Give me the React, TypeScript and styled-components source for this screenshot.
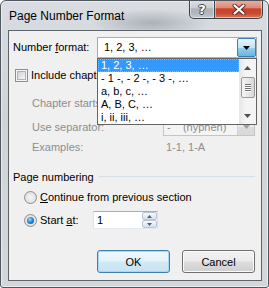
import React from "react";
import styled, { createGlobalStyle } from "styled-components";

const Global = createGlobalStyle`
  html, body { margin: 0; padding: 0; }
  body {
    font-family: "Liberation Sans", Arial, sans-serif;
    font-size: 11px;
    color: #000;
    background: #ffffff;
  }
`;

const Window = styled.div`
  box-sizing: border-box;
  width: 269px;
  height: 288px;
  display: flex;
  flex-direction: column;
  border: 1px solid #4f565e;
  border-radius: 6px 6px 3px 3px;
  background:
    radial-gradient(ellipse 60px 14px at 150px 22px, rgba(120, 126, 134, 0.45), rgba(120, 126, 134, 0) 100%),
    linear-gradient(180deg, #d9dde2 0%, #cfd4d9 40%, #d3d7dc 100%);
  box-shadow: inset 0 0 0 1px rgba(255, 255, 255, 0.55);
  overflow: hidden;
`;

const TitleBar = styled.div`
  flex: none;
  height: 29px;
  display: flex;
  align-items: flex-start;
  padding-left: 8px;
`;

const Title = styled.div`
  font-size: 12px;
  line-height: 15px;
  margin-top: 8px;
  color: #000;
`;

const CaptionButtons = styled.div`
  margin-left: auto;
  margin-right: 5px;
  margin-top: -1px;
  display: flex;
`;

const CaptionButton = styled.div<{ $close?: boolean }>`
  box-sizing: border-box;
  height: 19px;
  width: ${(p) => (p.$close ? 48 : 26)}px;
  display: flex;
  align-items: center;
  justify-content: center;
  border: 1px solid #3e434a;
  border-top: none;
  ${(p) => (p.$close ? "border-left: none;" : "")}
  border-radius: ${(p) => (p.$close ? "0 0 5px 0" : "0 0 0 5px")};
  background: ${(p) =>
    p.$close
      ? "linear-gradient(180deg, #e8b1a5 0%, #df8a76 42%, #c8432a 50%, #c84a2f 75%, #dc7a5c 100%)"
      : "linear-gradient(180deg, #dfe2e5 0%, #c9cdd2 42%, #aeb3b9 50%, #b2b7bd 75%, #c8ccd1 100%)"};
  box-shadow: inset 0 0 0 1px rgba(255, 255, 255, 0.45);
`;

const HelpGlyph = styled.span`
  font-family: "DejaVu Sans", sans-serif;
  font-weight: bold;
  font-size: 13px;
  line-height: 13px;
  color: #ffffff;
  text-shadow: 0 0 1px #30353b, 1px 0 0 #4a4f55, -1px 0 0 #4a4f55, 0 1px 0 #4a4f55, 0 -1px 0 #4a4f55;
`;

const Client = styled.div`
  flex: 1;
  box-sizing: border-box;
  margin: 0 6px 6px 7px;
  border: 1px solid #5d646c;
  background: #f0f0f0;
  display: flex;
  flex-direction: column;
  padding: 0 4px;
`;

const Row = styled.div<{ $top: number; $h: number; $indent?: number }>`
  display: flex;
  align-items: center;
  height: ${(p) => p.$h}px;
  margin-top: ${(p) => p.$top}px;
  padding-left: ${(p) => p.$indent ?? 0}px;
  line-height: 13px;
  flex: none;
`;

const Label = styled.span<{ $disabled?: boolean }>`
  color: ${(p) => (p.$disabled ? "#8d8d8d" : "#000")};
  white-space: nowrap;
`;

const U = styled.span`
  text-decoration: underline;
`;

const ComboWrap = styled.div`
  position: relative;
  margin-left: auto;
  width: 160px;
  height: 21px;
`;

const ComboField = styled.div`
  box-sizing: border-box;
  width: 100%;
  height: 100%;
  display: flex;
  align-items: center;
  border: 1px solid;
  border-color: #abadb3 #a5a9ae #b5b9bd #a5a9ae;
  background: #fff;
  padding-left: 6px;
`;

const ComboText = styled.span`
  flex: 1;
`;

const DropButton = styled.div`
  box-sizing: border-box;
  width: 19px;
  height: 19px;
  display: flex;
  align-items: center;
  justify-content: center;
  border: 1px solid #3c7fb1;
  border-radius: 2px;
  background: linear-gradient(180deg, #e5f4fc 0%, #c4e5f6 50%, #98d1ef 50%, #6ab6de 100%);
`;

const DropList = styled.div`
  position: absolute;
  top: 100%;
  left: 0;
  z-index: 3;
  box-sizing: border-box;
  width: 160px;
  height: 67px;
  border: 1px solid #646464;
  background: #fff;
  display: flex;
`;

const Items = styled.div`
  flex: 1;
  display: flex;
  flex-direction: column;
`;

const Item = styled.div<{ $selected?: boolean }>`
  box-sizing: border-box;
  height: 13px;
  line-height: 11px;
  padding-left: 2px;
  white-space: nowrap;
  color: ${(p) => (p.$selected ? "#fff" : "#000")};
  background: ${(p) => (p.$selected ? "#3399ff" : "transparent")};
  border: 1px ${(p) => (p.$selected ? "dotted #f2a23a" : "solid transparent")};
`;

const ScrollBar = styled.div`
  width: 17px;
  flex: none;
  background: linear-gradient(90deg, #e6e6e6, #f4f4f4 40%, #f4f4f4);
  display: flex;
  flex-direction: column;
  align-items: center;
`;

const ScrollArrow = styled.div`
  height: 17px;
  width: 17px;
  display: flex;
  align-items: center;
  justify-content: center;
`;

const Thumb = styled.div`
  box-sizing: border-box;
  width: 14px;
  height: 21px;
  margin-top: 1px;
  border: 1px solid #9a9a9a;
  border-radius: 2px;
  background: linear-gradient(90deg, #f3f3f3 0%, #e8e8e8 50%, #d6d6d6 100%);
  display: flex;
  flex-direction: column;
  align-items: center;
  justify-content: center;
  gap: 1px;
`;

const Grip = styled.div`
  width: 6px;
  height: 1px;
  background: #6f6f6f;
  box-shadow: 0 1px 0 #ffffff;
`;

const ScrollSpace = styled.div`
  flex: 1;
`;

const Checkbox = styled.div`
  box-sizing: border-box;
  width: 13px;
  height: 13px;
  margin-left: 2px;
  border: 1px solid #8e8f8f;
  background: #f4f4f4;
  display: flex;
  align-items: center;
  justify-content: center;
  &::after {
    content: "";
    width: 9px;
    height: 9px;
    background: linear-gradient(135deg, #cbcfd5 0%, #e6e8eb 60%, #f6f6f6 100%);
    border: 1px solid #aeb3b9;
    box-sizing: border-box;
  }
`;

const CheckLabel = styled.span`
  margin-left: 3px;
`;

const DisabledCombo = styled.div<{ $h: number }>`
  box-sizing: border-box;
  margin-left: auto;
  margin-right: 2px;
  width: 92px;
  height: ${(p) => p.$h}px;
  border: 1px solid #c2c5c9;
  background: #f4f4f4;
  display: flex;
  align-items: center;
  padding-left: 3px;
  color: #8d8d8d;
`;

const DisabledDrop = styled.div`
  margin-left: auto;
  box-sizing: border-box;
  width: 17px;
  height: 100%;
  border-left: 1px solid #d5d5d5;
  background: linear-gradient(180deg, #f4f4f4 0%, #e9e9e9 50%, #dcdcdc 50%, #d9d9d9 100%);
  display: flex;
  align-items: center;
  justify-content: center;
`;

const Value = styled.span`
  color: #8d8d8d;
  margin-left: auto;
  width: 91px;
`;

const GroupHeader = styled.div`
  display: flex;
  align-items: center;
  height: 13px;
  margin-top: 16px;
  flex: none;
  padding-right: 2px;
  &::after {
    content: "";
    flex: 1;
    height: 1px;
    margin-left: 5px;
    background: #d5dfe5;
  }
`;

const Radio = styled.div<{ $checked?: boolean }>`
  box-sizing: border-box;
  width: 13px;
  height: 13px;
  border-radius: 50%;
  border: 1px solid #8e8f8f;
  background: radial-gradient(circle at 50% 50%, #f6f6f6 0%, #e3e3e3 60%, #cfd1d4 100%);
  display: flex;
  align-items: center;
  justify-content: center;
  flex: none;
  &::after {
    content: "";
    display: ${(p) => (p.$checked ? "block" : "none")};
    width: 7px;
    height: 7px;
    border-radius: 50%;
    background: radial-gradient(circle at 40% 35%, #9fd8ff 0%, #2a8ad4 45%, #114c86 100%);
  }
`;

const RadioLabel = styled.span<{ $w?: number }>`
  margin-left: 3px;
  white-space: nowrap;
  ${(p) => (p.$w ? `width: ${p.$w}px;` : "")}
`;

const Spin = styled.div`
  box-sizing: border-box;
  width: 65px;
  height: 18px;
  border: 1px solid;
  border-color: #abadb3 #dbdfe6 #e3e9ef #e2e3ea;
  background: #fff;
  display: flex;
  align-items: center;
  padding-left: 3px;
`;

const SpinText = styled.span`
  flex: 1;
`;

const SpinButtons = styled.div`
  width: 15px;
  height: 16px;
  display: flex;
  flex-direction: column;
`;

const SpinHalf = styled.div`
  box-sizing: border-box;
  flex: 1;
  border: 1px solid #b9c6d8;
  border-radius: 2px;
  background: linear-gradient(180deg, #f6f8fb 0%, #e8edf4 50%, #d7dfea 100%);
  display: flex;
  align-items: center;
  justify-content: center;
`;

const ButtonRow = styled.div`
  display: flex;
  justify-content: flex-end;
  gap: 12px;
  margin-top: 21px;
  padding-right: 2px;
  flex: none;
`;

const PushButton = styled.button<{ $default?: boolean }>`
  box-sizing: border-box;
  width: 73px;
  height: 23px;
  font-family: "Liberation Sans", Arial, sans-serif;
  font-size: 11px;
  color: #000;
  border-radius: 3px;
  padding: 0;
  border: 1px solid ${(p) => (p.$default ? "#3c7fb1" : "#707070")};
  background: ${(p) =>
    p.$default
      ? "linear-gradient(180deg, #f0f8fd 0%, #e4f2fa 48%, #d2e9f6 52%, #c6e2f2 100%)"
      : "linear-gradient(180deg, #f2f2f2 0%, #ebebeb 48%, #dddddd 52%, #cfcfcf 100%)"};
  box-shadow: inset 0 0 0 1px ${(p) => (p.$default ? "#a7d7f2" : "#fbfbfb")};
`;

const Tri = ({ dir, color, w = 7, h = 4 }: { dir: "up" | "down"; color: string; w?: number; h?: number }) => (
  <svg width={w} height={h} viewBox={`0 0 ${w} ${h}`}>
    {dir === "down" ? (
      <polygon points={`0,0 ${w},0 ${w / 2},${h}`} fill={color} />
    ) : (
      <polygon points={`0,${h} ${w},${h} ${w / 2},0`} fill={color} />
    )}
  </svg>
);

const CloseGlyph = () => (
  <svg width="14" height="11" viewBox="0 0 14 11">
    <path d="M2.5 1.5 L11.5 9.5 M11.5 1.5 L2.5 9.5" stroke="#5a2a20" strokeWidth="4" strokeLinecap="round" />
    <path d="M2.5 1.5 L11.5 9.5 M11.5 1.5 L2.5 9.5" stroke="#ffffff" strokeWidth="2.2" strokeLinecap="round" />
  </svg>
);

const formats = ["1, 2, 3, …", "- 1 -, - 2 -, - 3 -, …", "a, b, c, …", "A, B, C, …", "i, ii, iii, …"];

export default function App() {
  return (
    <>
      <Global />
      <Window>
        <TitleBar>
          <Title>Page Number Format</Title>
          <CaptionButtons>
            <CaptionButton>
              <HelpGlyph>?</HelpGlyph>
            </CaptionButton>
            <CaptionButton $close>
              <CloseGlyph />
            </CaptionButton>
          </CaptionButtons>
        </TitleBar>
        <Client>
          <Row $top={6} $h={21}>
            <Label>
              Number <U>f</U>ormat:
            </Label>
            <ComboWrap>
              <ComboField>
                <ComboText>1, 2, 3, …</ComboText>
                <DropButton>
                  <Tri dir="down" color="#000" />
                </DropButton>
              </ComboField>
              <DropList>
                <Items>
                  {formats.map((f, i) => (
                    <Item key={f} $selected={i === 0}>
                      {f}
                    </Item>
                  ))}
                </Items>
                <ScrollBar>
                  <ScrollArrow>
                    <Tri dir="up" color="#505050" />
                  </ScrollArrow>
                  <Thumb>
                    <Grip />
                    <Grip />
                    <Grip />
                    <Grip />
                  </Thumb>
                  <ScrollSpace />
                  <ScrollArrow>
                    <Tri dir="down" color="#505050" />
                  </ScrollArrow>
                </ScrollBar>
              </DropList>
            </ComboWrap>
          </Row>
          <Row $top={11} $h={13}>
            <Checkbox />
            <CheckLabel>
              Include chapter <U>n</U>umber
            </CheckLabel>
          </Row>
          <Row $top={11} $h={21} $indent={19}>
            <Label $disabled>Chapter starts with style:</Label>
            <DisabledCombo $h={21}>
              <DisabledDrop>
                <Tri dir="down" color="#a0a0a0" />
              </DisabledDrop>
            </DisabledCombo>
          </Row>
          <Row $top={4} $h={18} $indent={19}>
            <Label $disabled>Use separator:</Label>
            <DisabledCombo $h={18}>
              -&nbsp;&nbsp;&nbsp;&nbsp;(hyphen)
              <DisabledDrop>
                <Tri dir="down" color="#a0a0a0" />
              </DisabledDrop>
            </DisabledCombo>
          </Row>
          <Row $top={5} $h={13} $indent={19}>
            <Label $disabled>Examples:</Label>
            <Value>1-1, 1-A</Value>
          </Row>
          <GroupHeader>Page numbering</GroupHeader>
          <Row $top={8} $h={13} $indent={11}>
            <Radio />
            <RadioLabel>
              <U>C</U>ontinue from previous section
            </RadioLabel>
          </Row>
          <Row $top={7} $h={18} $indent={11}>
            <Radio $checked />
            <RadioLabel $w={53}>
              Start <U>a</U>t:
            </RadioLabel>
            <Spin>
              <SpinText>1</SpinText>
              <SpinButtons>
                <SpinHalf>
                  <Tri dir="up" color="#4d6185" w={5} h={3} />
                </SpinHalf>
                <SpinHalf>
                  <Tri dir="down" color="#4d6185" w={5} h={3} />
                </SpinHalf>
              </SpinButtons>
            </Spin>
          </Row>
          <ButtonRow>
            <PushButton $default>OK</PushButton>
            <PushButton>Cancel</PushButton>
          </ButtonRow>
        </Client>
      </Window>
    </>
  );
}
